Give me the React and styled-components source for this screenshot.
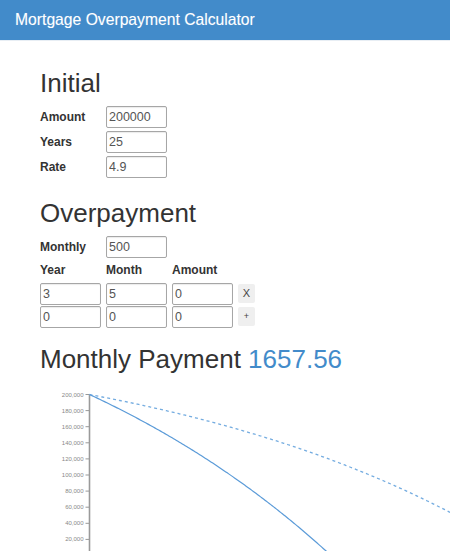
import React from "react";
import styled, { createGlobalStyle } from "styled-components";

const GlobalStyle = createGlobalStyle`
  html, body {
    margin: 0;
    padding: 0;
    background: #fff;
    overflow: hidden;
  }
  body {
    font-family: "Liberation Sans", Arial, sans-serif;
    color: #333;
  }
`;

const Page = styled.div`
  width: 450px;
  min-height: 551px;
  box-sizing: border-box;
  overflow: hidden;
`;

const Header = styled.header`
  height: 41px;
  background: #428bca;
  padding: 0 15px;
  box-sizing: border-box;
  border-bottom: 1px solid #e8eef4;
`;

const Title = styled.div`
  color: #fff;
  font-size: 15.7px;
  line-height: 40px;
  text-shadow: 0 0 1px rgba(255, 255, 255, 0.3);
`;

const Content = styled.main`
  padding: 0 0 0 40px;
`;

const Heading = styled.h2`
  margin: ${(p) => p.$top}px 0 ${(p) => (p.$bottom ?? 8)}px;
  font-size: 26px;
  line-height: 29px;
  font-weight: normal;
  color: #333;
`;

const Highlight = styled.span`
  color: #428bca;
`;

const Row = styled.div`
  display: grid;
  grid-template-columns: 61px 61px 61px 17px;
  column-gap: 5px;
  align-items: center;
  height: ${(p) => p.$h || 22}px;
  margin-bottom: ${(p) => p.$mb || 0}px;
`;

const Label = styled.label`
  font-size: 12px;
  font-weight: bold;
  color: #333;
`;

const Input = styled.input`
  width: 61px;
  height: 22px;
  box-sizing: border-box;
  margin: 0;
  padding: 0 2px;
  border: 1px solid #a6a6a6;
  border-radius: 2px;
  box-shadow: inset 0 1px 1px rgba(0, 0, 0, 0.08);
  font-family: "Liberation Sans", Arial, sans-serif;
  font-size: 12.5px;
  color: #555;
  outline: none;
`;

const SmallButton = styled.button`
  width: 17px;
  height: 19px;
  margin: 0;
  padding: 0;
  border: none;
  border-radius: 2px;
  background: #efefef;
  font-family: "Liberation Sans", Arial, sans-serif;
  font-size: ${(p) => p.$size || 11}px;
  color: #444;
  line-height: 19px;
`;

// mortgage maths for the chart
const balances = (principal, years, rate, overpay) => {
  const r = rate / 100 / 12;
  const n = years * 12;
  const pay = (principal * r) / (1 - Math.pow(1 + r, -n)) + overpay;
  const out = [principal];
  let b = principal;
  for (let i = 1; i <= n && b > 0; i++) {
    b = b * (1 + r) - pay;
    out.push(Math.max(b, 0));
  }
  return out;
};

const AXIS_X = 49.5;
const TOP = 12.5;
const PX_MONTH = 1.45;
const PX_VALUE = 161 / 200000;

const toPath = (values) =>
  values
    .map((v, i) => {
      const x = AXIS_X + i * PX_MONTH;
      const y = TOP + (200000 - v) * PX_VALUE;
      return `${i === 0 ? "M" : "L"}${x.toFixed(2)},${y.toFixed(2)}`;
    })
    .join("");

const ChartSvg = styled.svg`
  display: block;
  overflow: hidden;
`;

function Chart() {
  // only the ticks that fit in the window
  const ticks = [];
  for (let v = 200000; v >= 20000; v -= 20000) ticks.push(v);
  const base = balances(200000, 25, 4.9, 0);
  const over = balances(200000, 25, 4.9, 500);
  return (
    <ChartSvg width="410" height="175">
      <g fontFamily="Liberation Sans, Arial, sans-serif" fontSize="6" fill="#888">
        {ticks.map((v) => {
          const y = TOP + (200000 - v) * PX_VALUE;
          return (
            <g key={v}>
              <line x1={AXIS_X - 4} x2={AXIS_X} y1={y} y2={y} stroke="#999" strokeWidth="1" />
              <text x={AXIS_X - 6} y={y} dy="2" textAnchor="end">
                {v.toLocaleString("en-US")}
              </text>
            </g>
          );
        })}
      </g>
      <line x1={AXIS_X} x2={AXIS_X} y1={TOP} y2={TOP + 161} stroke="#9a9a9a" strokeWidth="1.6" />
      <path d={toPath(base)} fill="none" stroke="#74ace0" strokeWidth="1.3" strokeDasharray="3,3" />
      <path d={toPath(over)} fill="none" stroke="#5b9bd8" strokeWidth="1.2" />
    </ChartSvg>
  );
}

export default function App() {
  return (
    <Page>
      <GlobalStyle />
      <Header>
        <Title>Mortgage Overpayment Calculator</Title>
      </Header>
      <Content>
        <Heading $top={28}>Initial</Heading>
        <Row $mb={3}>
          <Label>Amount</Label>
          <Input defaultValue="200000" />
        </Row>
        <Row $mb={3}>
          <Label>Years</Label>
          <Input defaultValue="25" />
        </Row>
        <Row>
          <Label>Rate</Label>
          <Input defaultValue="4.9" />
        </Row>

        <Heading $top={20.5}>Overpayment</Heading>
        <Row>
          <Label>Monthly</Label>
          <Input defaultValue="500" />
        </Row>
        <Row $h={25}>
          <Label>Year</Label>
          <Label>Month</Label>
          <Label>Amount</Label>
        </Row>
        <Row $mb={1}>
          <Input defaultValue="3" />
          <Input defaultValue="5" />
          <Input defaultValue="0" />
          <SmallButton>X</SmallButton>
        </Row>
        <Row>
          <Input defaultValue="0" />
          <Input defaultValue="0" />
          <Input defaultValue="0" />
          <SmallButton $size={9}>+</SmallButton>
        </Row>

        <Heading $top={17.5} $bottom={8}>
          Monthly Payment <Highlight>1657.56</Highlight>
        </Heading>
        <Chart />
      </Content>
    </Page>
  );
}
